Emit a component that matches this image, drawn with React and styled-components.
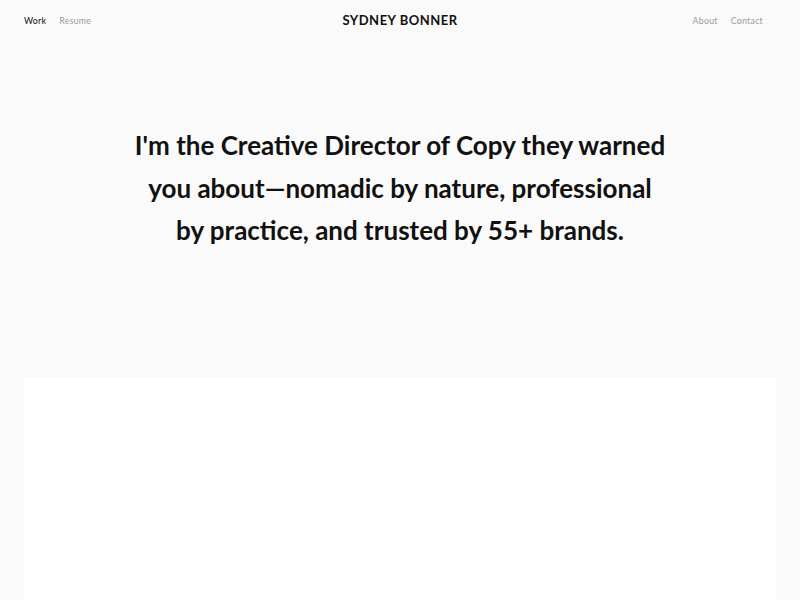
import React from "react";
import styled, { createGlobalStyle } from "styled-components";

const Global = createGlobalStyle`
  html, body { margin: 0; padding: 0; background: #fafafa; }
  body { font-family: Lato, "Open Sans", sans-serif; color: #111; -webkit-font-smoothing: antialiased; }
`;

const Page = styled.div`
  min-height: 600px;
  background: #fafafa;
`;

const Header = styled.header`
  display: grid;
  grid-template-columns: 1fr auto 1fr;
  align-items: center;
  height: 40px;
  padding: 0 24px;
`;

const NavGroup = styled.nav`
  display: flex;
  gap: 13px;
  justify-content: ${(p) => (p.$right ? "flex-end" : "flex-start")};
  padding-right: ${(p) => (p.$right ? "13px" : "0")};
`;

const NavLink = styled.a`
  font-size: 8.8px;
  letter-spacing: 0.25px;
  color: ${(p) => (p.$active ? "#111" : "#9a9a9a")};
  text-decoration: none;
  cursor: pointer;
`;

const Logo = styled.div`
  font-size: 13px;
  font-weight: 700;
  letter-spacing: 0.5px;
  color: #111;
`;

const Hero = styled.section`
  display: flex;
  justify-content: center;
  padding: 84px 24px 125px;
`;

const Headline = styled.h1`
  margin: 0;
  max-width: 534px;
  text-align: center;
  font-size: 26px;
  line-height: 42.5px;
  font-weight: 700;
  color: #111;
`;

const Card = styled.div`
  margin: 0 24px;
  height: 223px;
  background: #ffffff;
`;

export default function App() {
  return (
    <Page>
      <Global />
      <Header>
        <NavGroup>
          <NavLink $active>Work</NavLink>
          <NavLink>Resume</NavLink>
        </NavGroup>
        <Logo>SYDNEY BONNER</Logo>
        <NavGroup $right>
          <NavLink>About</NavLink>
          <NavLink>Contact</NavLink>
        </NavGroup>
      </Header>
      <Hero>
        <Headline>
          I'm the Creative Director of Copy they warned you about—nomadic by nature, professional by practice, and trusted by 55+ brands.
        </Headline>
      </Hero>
      <Card />
    </Page>
  );
}
